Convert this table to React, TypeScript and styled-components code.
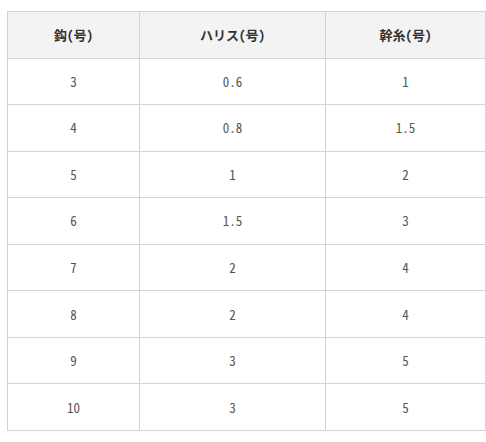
import React from "react";
import styled, { createGlobalStyle } from "styled-components";

const Global = createGlobalStyle`
  html, body { margin: 0; padding: 0; background: #fff; }
  body { font-family: "Noto Sans Mono CJK JP", "Noto Sans CJK JP", "DejaVu Sans Mono", monospace; }
`;

const Wrap = styled.div`
  padding: 11px 0 0 7px;
`;

const Table = styled.table`
  width: 479px;
  border-collapse: collapse;
  table-layout: fixed;
  font-size: 13px;
  color: #555;
`;

const Th = styled.th<{ $w: number }>`
  width: ${(p) => p.$w}px;
  height: 45.56px;
  padding: 0;
  background: #f3f3f3;
  border: 1px solid #d3d3d3;
  font-weight: 700;
  color: #333;
  text-align: center;
  vertical-align: middle;
`;

const Td = styled.td`
  height: 45.56px;
  padding: 0;
  border: 1px solid #d3d3d3;
  text-align: center;
  vertical-align: middle;
`;

const rows: [string, string, string][] = [
  ["3", "0.6", "1"],
  ["4", "0.8", "1.5"],
  ["5", "1", "2"],
  ["6", "1.5", "3"],
  ["7", "2", "4"],
  ["8", "2", "4"],
  ["9", "3", "5"],
  ["10", "3", "5"],
];

export default function App() {
  return (
    <>
      <Global />
      <Wrap>
        <Table>
          <thead>
            <tr>
              <Th $w={131}>鈎(号)</Th>
              <Th $w={185}>ハリス(号)</Th>
              <Th $w={159}>幹糸(号)</Th>
            </tr>
          </thead>
          <tbody>
            {rows.map((r, i) => (
              <tr key={i}>
                {r.map((c, j) => (
                  <Td key={j}>{c}</Td>
                ))}
              </tr>
            ))}
          </tbody>
        </Table>
      </Wrap>
    </>
  );
}
